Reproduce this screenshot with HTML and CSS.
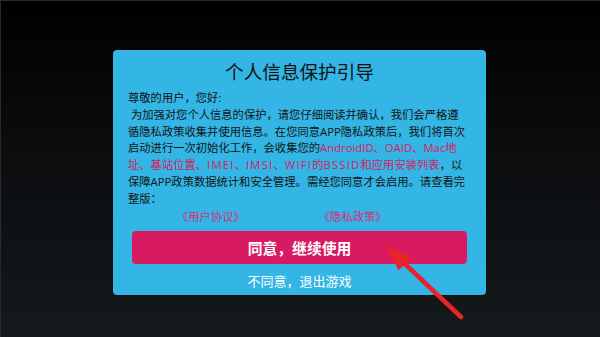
FILE: index.html
```html
<!DOCTYPE html>
<html lang="zh-CN">
<head>
<meta charset="utf-8">
<link rel="stylesheet" href="styles.css">
</head>
<body>
<div class="screen">
  <div class="dialog">
    <h1 class="title">个人信息保护引导</h1>
    <p class="body">尊敬的用户，您好:<br>&nbsp;为加强对您个人信息的保护，请您仔细阅读并确认，我们会严格遵<br>循隐私政策收集并使用信息。在您同意APP隐私政策后，我们将首次<br>启动进行一次初始化工作，会收集您的<span class="hl">AndroidID、OAID、Mac地<br>址、基站位置、<span class="caps">IMEI</span>、<span class="caps">IMSI</span>、<span class="caps">WIFI</span>的<span class="caps">BSSID</span>和应用安装列表</span>，以<br>保障APP政策数据统计和安全管理。需经您同意才会启用。请查看完<br>整版：</p>
    <div class="links">
      <span class="link">《用户协议》</span>
      <span class="link">《隐私政策》</span>
    </div>
    <button class="agree">同意，继续使用</button>
    <div class="decline">不同意，退出游戏</div>
  </div>
  <svg class="arrow" width="600" height="337" viewBox="0 0 600 337">
    <line x1="403" y1="262" x2="460" y2="316" stroke="#e8232a" stroke-width="4.5" stroke-linecap="round"/>
    <polygon points="385.5,244.5 397.5,269.5 411,256.5" fill="#e8232a"/>
  </svg>
</div>
</body>
</html>
```
FILE: styles.css
```css
html, body {
  margin: 0;
  padding: 0;
}
body {
  width: 600px;
  height: 337px;
  overflow: hidden;
  font-family: "Noto Sans CJK SC", "Noto Sans", sans-serif;
}
.screen {
  position: relative;
  box-sizing: border-box;
  width: 600px;
  height: 337px;
  background: linear-gradient(to bottom, #000000 0%, #0b0d0f 45%, #15191c 100%);
  border-top: 1px solid #2a2a2a;
  border-left: 1px solid #2a2a2a;
  display: flex;
  flex-direction: column;
  align-items: center;
  padding-top: 49px;
  padding-right: 2px;
}
.dialog {
  box-sizing: border-box;
  width: 373px;
  height: 245px;
  background: #33b5e5;
  border-radius: 4px;
  box-shadow: 0 0 0 1px rgba(0,0,0,0.35);
  padding: 7px 15px 0 15px;
  display: flex;
  flex-direction: column;
}
.title {
  margin: 0;
  font-size: 18.6px;
  font-weight: 400;
  line-height: 27px;
  text-align: center;
  color: #111;
}
.body {
  margin: 6px 0 0 0;
  font-family: "Open Sans", "Noto Sans CJK SC", sans-serif;
  font-size: 11.3px;
  line-height: 16.8px;
  color: #141414;
  white-space: nowrap;
}
.hl {
  color: #d81b60;
}
.caps {
  letter-spacing: 1.2px;
}
.links {
  display: flex;
  height: 17px;
  line-height: 17px;
  font-size: 11.3px;
  color: #d6307a;
}
.link:first-child {
  margin-left: 49px;
}
.link:last-child {
  margin-left: 74px;
}
.agree {
  margin: 6px 4px 0 4px;
  height: 33px;
  border: none;
  border-radius: 4px;
  background: #d81b60;
  color: #fff;
  font-family: inherit;
  font-size: 14.8px;
  font-weight: 700;
  letter-spacing: 0;
  padding: 0;
}
.decline {
  margin-top: 8px;
  text-align: center;
  font-size: 13px;
  line-height: 17px;
  color: #fff;
}
.arrow {
  position: absolute;
  left: 0;
  top: 0;
  pointer-events: none;
}
```
